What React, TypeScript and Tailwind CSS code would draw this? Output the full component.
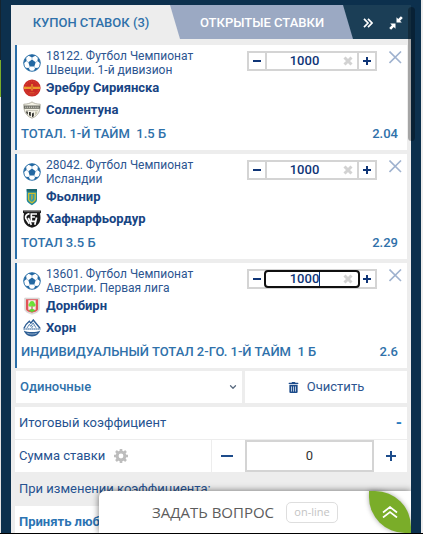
import { useState, type ReactNode } from "react";
import { FaTrashAlt } from "react-icons/fa";
import { ChevronDown } from "lucide-react";
import clsx from "clsx";

type Team = { name: string; logo: ReactNode };

type Bet = {
  id: string;
  title: string;
  teams: Team[];
  market: string;
  odds: string;
};

function BallIcon() {
  return (
    <svg viewBox="0 0 18 18" className="size-[18px] shrink-0" aria-hidden="true">
      <circle cx="9" cy="9" r="8.3" fill="#fff" stroke="#2f74ab" strokeWidth="1" />
      <g fill="#2368a2">
        <path d="M9 5.5l3.7 2.7-1.4 4.2H6.700L5.300 8.200z" />
        <path d="M5.200 1.600L9 3.500l3.800-1.900A8.500 8.500 0 0 0 5.200 1.600z" />
        <path d="M.7 9.200l2.900-2.200-.5-3.400A8.400 8.400 0 0 0 .7 9.200z" />
        <path d="M17.300 9.200l-2.900-2.200.5-3.400a8.400 8.400 0 0 1 2.400 5.600z" />
        <path d="M2.400 13.800l3.400.2 1.500 3.100a8.400 8.400 0 0 1-4.900-3.300z" />
        <path d="M15.600 13.800l-3.400.2-1.500 3.100a8.400 8.400 0 0 0 4.900-3.300z" />
      </g>
      <path
        d="M9 5.500V3M12.700 8.200l1.900-1.200M11.300 12.400l.9 1.800M6.700 12.400l-.9 1.800M5.300 8.200L3.400 7"
        stroke="#6fa0c8"
        strokeWidth=".6"
      />
    </svg>
  );
}

function RedCrest() {
  return (
    <svg viewBox="0 0 18 18" className="size-[18px]" aria-hidden="true">
      <circle cx="9" cy="9" r="8.6" fill="#cb2a26" />
      <circle cx="9" cy="9" r="6.800" fill="none" stroke="#dc5236" strokeWidth=".8" strokeDasharray="1.2 1" />
      <path d="M1 7.800h6.800l.4-2.600h1.600l.4 2.600H17v2.300h-6.800l-.3 1.500H8.100l-.3-1.500H1z" fill="#f0a92c" />
      <path d="M8.500 6h1v5.500h-1z" fill="#cf4a2a" />
      <path d="M1 9h16" stroke="#dd7629" strokeWidth=".5" />
      <path d="M6.500 13.800h5" stroke="#e06d33" strokeWidth=".8" />
    </svg>
  );
}

function ShieldCrest() {
  return (
    <svg viewBox="0 0 18 18" className="size-[18px]" aria-hidden="true">
      <path
        d="M.8 3.200C4 3.200 7 2.400 9 .9c2 1.500 5 2.300 8.200 2.300.3 6-1.400 11.400-8.200 14C2.200 14.600.5 9.200.8 3.200z"
        fill="#f4f2e6"
        stroke="#a3a193"
        strokeWidth=".8"
      />
      <path d="M1 4.500h16v3.300H1z" fill="#6d6e66" />
      <path d="M2.200 6.200h13.800" stroke="#e8e6dc" strokeWidth="1" strokeDasharray="1.100 .8" />
      <path d="M3 9.500h12" stroke="#b9b7a9" strokeWidth=".7" />
      <path d="M2.800 10.500l2 0 0 3.300-1-1zM6 11l1.800 0 0 4.300-1.800-1zM9 12.500l1.800-1v3.800L9 16.300z" fill="#2d2d2a" />
      <path d="M12 10.500h2.600l-.9 2.500-1.700 1.500z" fill="#c7c5ae" />
    </svg>
  );
}

function BlueYellowCrest() {
  return (
    <svg viewBox="0 0 18 18" className="size-[18px]" aria-hidden="true">
      <path d="M3.700 1h10.300v11c0 2.200-2.600 3.200-5.100 5.300-2.600-2.100-5.200-3.100-5.200-5.300z" fill="#24899c" />
      <path d="M3.700 1h10.300v2.600H3.700z" fill="#1d6670" />
      <path d="M5.600 5.300h6.600v6c0 1.600-1.600 2.200-3.300 3.500-1.700-1.300-3.300-1.900-3.300-3.500z" fill="#2e9fb0" stroke="#d0bf2c" strokeWidth="1.300" />
      <path d="M8.100 6.500h1.700v4.200l-1.700 2z" fill="#b6a53c" />
    </svg>
  );
}

function BlackCrest() {
  return (
    <svg viewBox="0 0 18 18" className="size-[18px]" aria-hidden="true">
      <path d="M0 .4h18v2.400l-1 .8C18.400 9.700 17 16 9 17.800 1 16-.4 9.700 1 3.600l-1-.8z" fill="#1a1a1a" />
      <path d="M.8 1.600h16.400" stroke="#8d8d8d" strokeWidth=".6" />
      <g fill="none" stroke="#fff" strokeWidth="1.700">
        <path d="M6.500 3.600C3.500 4.200 2.300 6 2.700 8.300l3.600 5.400" />
        <path d="M14 4H8.300v7M8.300 7h3.600" />
        <path d="M5.300 7.800l3 7M13.600 7.500l-1.800 7.300M7.300 11.300h5.200" />
      </g>
    </svg>
  );
}

function GreenTreeCrest() {
  return (
    <svg viewBox="0 0 18 18" className="size-[18px]" aria-hidden="true">
      <path d="M1.700 1h14.600v11c0 2.800-3.300 4-7.300 5.300-4-1.300-7.300-2.500-7.300-5.300z" fill="#dedbd9" stroke="#c9c6c4" strokeWidth=".5" />
      <path d="M3 2.200h12v9.800c0 2-2.700 2.800-6 3.700-3.300-.9-6-1.700-6-3.700z" fill="#e15358" />
      <path d="M5.300 3.200h7.400v9.600H5.300z" fill="#f9eee8" />
      <circle cx="9" cy="6.400" r="2.500" fill="#6be036" />
      <circle cx="7.200" cy="8" r="1.800" fill="#75e83d" />
      <circle cx="10.800" cy="8" r="1.800" fill="#6be036" />
      <path d="M8.500 9h1v3h-1z" fill="#8e5a35" />
      <path d="M5.800 13.600c1.200-2.200 5.200-2.200 6.400 0L9 15.300z" fill="#5ad733" />
    </svg>
  );
}

function MountainCrest() {
  return (
    <svg viewBox="0 0 18 18" className="size-[18px]" aria-hidden="true">
      <path d="M1 9.300C2 6.500 4 4 6.300 2.200l1.500 2L10.300 1 17 9.300" fill="none" stroke="#2d5d93" strokeWidth="1.400" />
      <path d="M4 9l2.400-3.700 1.400 2.200 2.300-3.600L13 8.800M8.500 9l1.800-2.400" fill="none" stroke="#4a78a8" strokeWidth=".9" />
      <path d="M.4 9.900h17.200" stroke="#5f87b1" strokeWidth="1.500" strokeDasharray="1.500 .5" />
      <path d="M.8 11.500c3.300 2 13.100 2 16.400 0-.9 3.400-4.100 5.900-8.200 5.900S1.700 14.900.8 11.500z" fill="#2d5d93" />
      <path d="M4.300 14.300c3 1 6.400 1 9.400 0" stroke="#b9cde0" fill="none" strokeWidth=".7" />
    </svg>
  );
}

const bets: Bet[] = [
  {
    id: "18122",
    title: "18122. Футбол Чемпионат Швеции. 1-й дивизион",
    teams: [
      { name: "Эребру Сириянска", logo: <RedCrest /> },
      { name: "Соллентуна", logo: <ShieldCrest /> },
    ],
    market: "ТОТАЛ. 1-Й ТАЙМ  1.5 Б",
    odds: "2.04",
  },
  {
    id: "28042",
    title: "28042. Футбол Чемпионат Исландии",
    teams: [
      { name: "Фьолнир", logo: <BlueYellowCrest /> },
      { name: "Хафнарфьордур", logo: <BlackCrest /> },
    ],
    market: "ТОТАЛ 3.5 Б",
    odds: "2.29",
  },
  {
    id: "13601",
    title: "13601. Футбол Чемпионат Австрии. Первая лига",
    teams: [
      { name: "Дорнбирн", logo: <GreenTreeCrest /> },
      { name: "Хорн", logo: <MountainCrest /> },
    ],
    market: "ИНДИВИДУАЛЬНЫЙ ТОТАЛ 2-ГО. 1-Й ТАЙМ  1 Б",
    odds: "2.6",
  },
];

function Stepper({ label, active }: { label: string; active: boolean }) {
  const [value, setValue] = useState("1000");
  const shift = (by: number) => setValue((v) => String(Math.max(0, Number(v) + by)));

  return (
    <div className="flex h-5 w-[130px] border-2 border-[#d4d4d4] text-[#0f3577]">
      <button onClick={() => shift(-100)} aria-label="Меньше" className="flex w-4 items-center justify-center">
        <svg viewBox="0 0 8 8" className="size-2">
          <path d="M0 3h8v2H0z" fill="currentColor" />
        </svg>
      </button>
      <div
        className={clsx(
          "relative flex min-w-0 flex-1 items-center border-x-2",
          active ? "rounded-[3px] border-transparent outline-2 -outline-offset-1 outline-[#101010]" : "border-[#d4d4d4]"
        )}
      >
        <input
          aria-label={label}
          value={value}
          onChange={(e) => setValue(e.target.value)}
          className="w-full min-w-0 bg-transparent pr-[15px] text-center text-[13px] leading-4 font-medium outline-none"
        />
        {/* Text caret of the focused field */}
        {active && <span className="absolute top-px left-[52px] h-[14px] w-px bg-[#0f3577]" />}
        <button onClick={() => setValue("")} aria-label="Стереть" className="absolute right-1">
          <svg viewBox="0 0 10 10" className="size-[10px]">
            <path d="M1.500 1.500l7 7M8.500 1.500l-7 7" stroke="#d2d2d2" strokeWidth="3" />
          </svg>
        </button>
      </div>
      <button onClick={() => shift(100)} aria-label="Больше" className="flex w-4 items-center justify-center">
        <svg viewBox="0 0 8 8" className="size-2">
          <path d="M0 4h8M4 0v8" stroke="currentColor" strokeWidth="2" />
        </svg>
      </button>
    </div>
  );
}

function BetCard({ bet, active }: { bet: Bet; active: boolean }) {
  return (
    <article className="border-l-2 border-[#2a6ea8] bg-white pt-1 pr-[9px] pb-1 pl-1">
      <div className="flex items-start">
        <div className="flex flex-1 items-center gap-[5px] pl-0.5">
          <BallIcon />
          <p className="w-[160px] text-[12px] leading-[14px] text-[#2c5590]">{bet.title}</p>
        </div>
        <div className="flex items-start gap-3 pt-0.5">
          <Stepper label={`Ставка ${bet.id}`} active={active} />
          <button aria-label="Удалить" className="-mr-1">
            <svg viewBox="0 0 13 13" className="size-[13px]">
              <path d="M.5.500l11.500 11.500M12 .500L.5 12" stroke="#9fb2cf" strokeWidth="1.600" />
            </svg>
          </button>
        </div>
      </div>
      {bet.teams.map((team) => (
        <div key={team.name} className="flex h-[22px] items-center gap-[5px] pl-0.5">
          {team.logo}
          <span className="text-[13px] font-bold text-[#174483]">{team.name}</span>
        </div>
      ))}
      <div className="flex h-[25px] items-center justify-between text-[13px] font-medium text-[#2f71aa]">
        <span className="whitespace-pre">{bet.market}</span>
        <span>{bet.odds}</span>
      </div>
    </article>
  );
}

function Tabs() {
  return (
    <header className="relative h-[34px]">
      {/* Slanted tab shapes */}
      <svg viewBox="0 0 400 34" preserveAspectRatio="none" className="absolute size-full" aria-hidden="true">
        <path d="M0 0h400v34H0z" fill="#1b3e56" />
        <path d="M0 0h332l10 34H0z" fill="#9ba9c3" />
        <path d="M0 0h159l10 34H0z" fill="#ededed" />
      </svg>
      <nav className="relative flex h-full items-center pt-px text-[13px] font-medium">
        <button className="w-40 text-[#2f71aa]">КУПОН СТАВОК (3)</button>
        <button className="w-[182px] text-white">ОТКРЫТЫЕ СТАВКИ</button>
        <button aria-label="Свернуть вправо" className="ml-2.5">
          <svg viewBox="0 0 10 10" className="size-[10px]">
            <path d="M1 .8L5 5 1 9.200M5 .8L9 5 5 9.200" fill="none" stroke="#fff" strokeWidth="1.700" />
          </svg>
        </button>
        <button aria-label="Уменьшить" className="mr-2 ml-auto">
          <svg viewBox="0 0 14 14" className="size-[14px]" fill="#fff">
            <path d="M7.500 6.500V1.200l1.700 1.700L11.900.200l1.900 1.900-2.700 2.700 1.700 1.700zM6.500 7.500v5.300l-1.700-1.700-2.700 2.700-1.900-1.900 2.700-2.700L1.200 7.500z" />
          </svg>
        </button>
      </nav>
    </header>
  );
}

function GearIcon() {
  return (
    <svg viewBox="0 0 14 14" className="size-[14px]" aria-hidden="true">
      <circle cx="7" cy="7" r="3.900" fill="none" stroke="#bdbdbd" strokeWidth="3" />
      <g stroke="#bdbdbd" strokeWidth="2.600">
        <path d="M7 0v2.500M7 11.500V14M0 7h2.500M11.500 7H14M2 2l1.800 1.800M10.200 10.200L12 12M12 2l-1.800 1.800M3.800 10.200L2 12" />
      </g>
    </svg>
  );
}

function ChatBar() {
  return (
    <aside className="absolute right-0 bottom-0 flex h-[42px] w-[78%] items-center rounded-tl-md bg-white pl-[53px] shadow-[0_0_7px_rgba(0,0,0,0.55)]">
      <a href="#chat" className="flex items-center gap-3 font-['Open_Sans',sans-serif]">
        <span className="text-[15px] whitespace-nowrap text-[#5c5c5c]">ЗАДАТЬ ВОПРОС</span>
        <span className="flex h-[21px] w-[52px] items-center justify-center rounded-[5px] border border-[#dedede] text-[11px] text-[#c4c4c4]">
          on-line
        </span>
      </a>
      <button
        aria-label="Развернуть"
        className="ml-auto flex h-full w-[42px] items-center justify-center rounded-tr-[36px] rounded-bl-[36px] bg-[#7aad29] shadow-[0_0_5px_rgba(0,0,0,0.35)]"
      >
        <svg viewBox="0 0 16 12" className="h-3 w-4">
          <path d="M1 6.500L8 1l7 5.500M1 11.500L8 6l7 5.500" fill="none" stroke="#fff" strokeWidth="1.700" />
        </svg>
      </button>
    </aside>
  );
}

export default function App() {
  const [total, setTotal] = useState("0");

  return (
    <div className="flex h-screen flex-col overflow-hidden border-b border-black bg-[#ededed] font-[Roboto,sans-serif]">
      <div className="flex min-h-0 flex-1">
        {/* Sliver of the page behind the coupon */}
        <div className="flex w-px flex-col">
          <span className="h-[60px] bg-[#14242f]" />
          <span className="h-[37px] bg-[#7aad29]" />
          <span className="flex-1 bg-[#e3e3e3]" />
        </div>

        <div className="relative mr-0.5 flex min-w-0 flex-1 bg-[#0c304d] px-[10px] pt-[5px]">
          <main className="relative min-w-0 flex-1 overflow-hidden bg-[#ededed]">
            <Tabs />

            <div className="flex flex-col gap-1 pt-1.5 pr-1 pl-1">
              {bets.map((bet) => (
                <BetCard key={bet.id} bet={bet} active={bet.id === "13601"} />
              ))}
            </div>

            <div className="mt-[3px] mr-1 ml-[5px] flex h-8 gap-[3px] text-[13px]">
              <div className="relative flex-[226] bg-white">
                <select
                  aria-label="Тип ставки"
                  className="h-full w-full appearance-none bg-transparent pl-1 font-medium text-[#2f71aa]"
                >
                  <option>Одиночные</option>
                </select>
                <ChevronDown
                  strokeWidth={3}
                  className="pointer-events-none absolute top-[11px] right-1 size-[10px] text-[#5a6b80]"
                />
              </div>
              <button className="flex flex-[162] items-center justify-center gap-2 bg-white text-[#2c5590]">
                <FaTrashAlt className="size-[11px] text-[#1d4c8b]" />
                Очистить
              </button>
            </div>

            <div className="mx-1 mt-1 text-[13px] text-[#265290]">
              <div className="flex h-8 items-center justify-between bg-white pr-[5px] pl-1">
                <span>Итоговый коэффициент</span>
                <span className="text-base font-bold text-[#2b7bbf]">-</span>
              </div>

              <div className="mt-px flex h-8 bg-white">
                <label htmlFor="total" className="flex flex-1 items-center gap-[9px] pl-1">
                  Сумма ставки
                  <GearIcon />
                </label>
                <button
                  aria-label="Уменьшить сумму"
                  className="flex w-[34px] items-center justify-center border-l border-[#ededed] pr-1"
                >
                  <svg viewBox="0 0 12 12" className="size-3">
                    <path d="M0 5h12v2H0z" fill="#1d4c8b" />
                  </svg>
                </button>
                <input
                  id="total"
                  value={total}
                  onChange={(e) => setTotal(e.target.value)}
                  className="w-[129px] border-2 border-[#d4d4d4] text-center text-[#333] outline-none"
                />
                <button aria-label="Увеличить сумму" className="flex w-[33px] items-center justify-center">
                  <svg viewBox="0 0 10 10" className="size-[10px]">
                    <path d="M0 5h10M5 0v10" stroke="#1d4c8b" strokeWidth="2" />
                  </svg>
                </button>
              </div>

              <p className="flex h-[34px] items-center pl-1">При изменении коэффициента:</p>
              <div className="flex h-8 items-center bg-white pl-1 font-bold text-[#2b74b3]">Принять любые</div>
            </div>

            <ChatBar />
          </main>

          {/* Scrollbar thumb */}
          <div className="absolute top-[7px] right-1.5 h-[134px] w-[7px] rounded-full bg-black/30" />
        </div>
      </div>
    </div>
  );
}
